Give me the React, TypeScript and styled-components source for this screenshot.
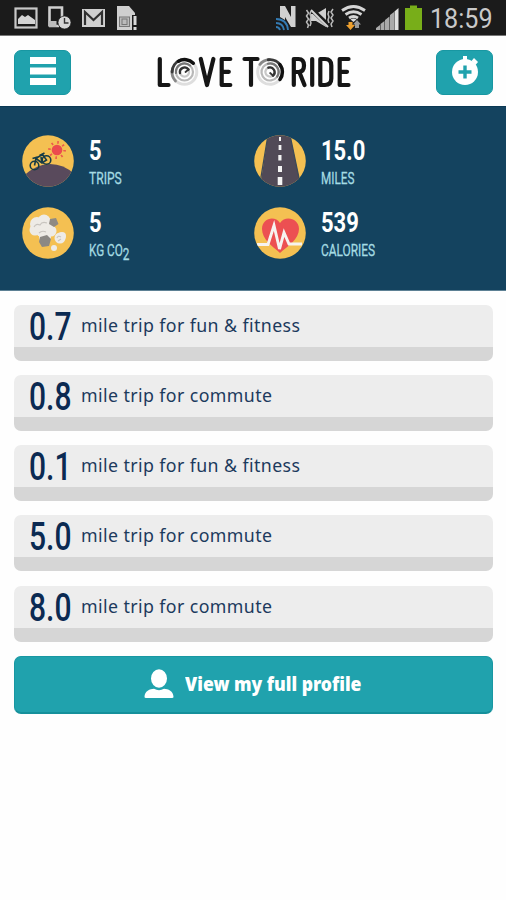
import React from 'react';
import styled, { createGlobalStyle } from 'styled-components';

const GlobalStyle = createGlobalStyle`
  * { box-sizing: border-box; }
  body { margin: 0; background: #fefefe; font-family: "Noto Sans", "Open Sans", sans-serif; }
  svg { display: block; flex: none; }
`;

const Screen = styled.div`
  width: 506px;
  height: 900px;
  display: flex;
  flex-direction: column;
  overflow: hidden;
  background: #fefefe;
`;

const StatusBar = styled.header`
  flex: none;
  height: 36px;
  display: flex;
  justify-content: space-between;
  background: #1b1b1b;
  border-bottom: 1px solid #777;
`;

const StatusGroup = styled.div`
  display: flex;
`;

const Narrow = styled.span<{ $scale: number }>`
  display: block;
  white-space: nowrap;
  transform: scaleX(${(p) => p.$scale});
  transform-origin: 0 50%;
`;

const Clock = styled(Narrow)`
  width: 76px;
  font: 400 27px/38px Roboto, sans-serif;
  color: #c9c9c9;
`;

const TitleBar = styled.div`
  flex: none;
  height: 70px;
  padding: 13.5px 13px 0 14px;
  display: flex;
  justify-content: space-between;
  align-items: flex-start;
`;

const IconButton = styled.button`
  width: 57px;
  height: 45px;
  padding: 0;
  display: flex;
  align-items: center;
  justify-content: center;
  border: 1px solid #1897a2;
  border-radius: 7px;
  background: #20a2ad;
`;

const Stats = styled.section`
  flex: none;
  height: 185px;
  padding: 28px 0 0 22px;
  display: grid;
  grid-template-columns: 232px 1fr;
  grid-template-rows: 71.5px 71.5px;
  background: #14435f;
  border-top: 1px solid #0a3853;
  border-bottom: 1px solid #5d8094;
`;

const Stat = styled.div`
  display: flex;
  gap: 15px;
`;

const StatText = styled.div`
  padding-top: 1px;
`;

const StatValue = styled(Narrow)`
  font: 700 27.5px/29px Roboto, sans-serif;
  color: #fff;
`;

const StatLabel = styled(Narrow)`
  font: 400 17px/27px Roboto, sans-serif;
  color: #a5dce3;
  -webkit-text-stroke: 0.3px #a5dce3;
`;

const Subscript = styled.span`
  position: relative;
  top: 4px;
`;

const Trips = styled.ul`
  flex: none;
  margin: 0;
  padding: 13.5px 13px 0 14px;
  display: flex;
  flex-direction: column;
  gap: 14.3px;
  list-style: none;
`;

const Trip = styled.li`
  height: 56px;
  padding-left: 15px;
  display: flex;
  border-radius: 7px;
  border-bottom: 14px solid #d6d6d6;
  background: #ededed;
  color: #0b2a52;
`;

const Distance = styled(Narrow)`
  width: 52px;
  font: 500 39.5px/43px Roboto, sans-serif;
`;

const TripLabel = styled(Narrow)`
  font: 400 18.5px/40px "Noto Sans", sans-serif;
  letter-spacing: 0.42px;
  color: #1c3a5d;
`;

const ProfileButton = styled.button`
  flex: none;
  height: 58.5px;
  margin: 14px 13px 0 14px;
  padding: 0 0 0 129px;
  display: flex;
  align-items: center;
  gap: 10.5px;
  border: 1px solid #1897a2;
  border-bottom: 2px solid #15909b;
  border-radius: 7px;
  background: #20a2ad;
`;

const ProfileLabel = styled(Narrow)`
  font: 900 19.5px/26px "Noto Sans", sans-serif;
  color: #fff;
`;

const LeftStatus = () => (
  <StatusGroup>
    <svg width="44" height="35" viewBox="0 0 44 35">
      <rect x="15.5" y="8.5" width="21" height="19" fill="none" stroke="#c8c8c8" strokeWidth="2.2" />
      <path d="M18 24v-5l4-4 3 2 3-2 7 5v4z" fill="#d4d4d4" />
    </svg>
    <svg width="33" height="35" viewBox="44 0 33 35">
      <path d="M49.5 26V7.5H62V17M49 26h10" fill="none" stroke="#cfcfcf" strokeWidth="2.6" />
      <path d="M48.5 21h8v6h-8z" fill="#bbb" />
      <circle cx="64.500" cy="22.500" r="6.500" fill="#d6d6d6" stroke="#1b1b1b" strokeWidth=".7" />
      <path d="M64.500 18v5h4" fill="none" stroke="#333" strokeWidth="1.400" />
    </svg>
    <svg width="33" height="35" viewBox="77 0 33 35">
      <rect x="82" y="9" width="23" height="18" fill="#d0d0d0" />
      <path d="M85 25V12l8.500 8L102 12v13" fill="none" stroke="#303030" strokeWidth="2.200" />
    </svg>
    <svg width="32" height="35" viewBox="110 0 32 35">
      <path d="M117 6h12l6 7v17h-18z" fill="#cfcfcf" />
      <rect x="119.500" y="17" width="10" height="9.500" fill="#bbb" stroke="#777" />
      <rect x="122" y="19" width="5" height="5.500" fill="none" stroke="#777" />
      <path d="M132 15h6v16h-6z" fill="#1b1b1b" />
      <path d="M135 16v9m0 2v3" stroke="#d8d8d8" strokeWidth="3" />
    </svg>
  </StatusGroup>
);

const RightStatus = () => (
  <StatusGroup>
    <svg width="31" height="35" viewBox="272 0 31 35">
      <path d="M280 17V6h5l6 11V6h4.500v21H291l-6-10v3" fill="#d0d0d0" />
      <g fill="none" stroke="#347bb3" strokeWidth="1.900">
        <path d="M276 19q11 0 12 11M276 23q7 0 8 7M276 27q3 0 4 3" />
      </g>
    </svg>
    <svg width="35" height="35" viewBox="303 0 35 35">
      <path d="M311 14h5l10-6v19l-10-6h-5z" fill="#cfcfcf" />
      <path d="M311 9l18 17" stroke="#1b1b1b" strokeWidth="4.500" />
      <path d="M311 10l17 17" stroke="#d4d4d4" strokeWidth="2" />
      <path d="M306.500 10l2 3-2 3 2 3-2 3 2 3-1 3M333 9l-2 3 2 3-2 3 2 3-2 3 1 3M329 11l-1 3 1 3-1 3 1 3M311 11l-1 3 1 3-1 3 1 3 -1 3" fill="none" stroke="#bbb" strokeWidth="1.500" />
    </svg>
    <svg width="34" height="35" viewBox="338 0 34 35">
      <g fill="none" stroke="#d5d5d5" strokeWidth="2.800">
        <path d="M342 10.500q11.500-8 23 0" />
        <path d="M345.500 14.500q8-5.500 16 0" />
        <path d="M349 18q4.500-3 9 0" />
      </g>
      <path d="M353.500 22l-3-2.500q3-2 6 0z" fill="#ddd" />
      <path d="M348.500 22h4v3h2.500l-4.500 5-4.500-5h2.500z" fill="#eda02f" />
      <path d="M357 20l4 4.500h-2V28h-4v-3.500h-2z" fill="#999" />
    </svg>
    <svg width="31" height="35" viewBox="372 0 31 35">
      <path d="M376 30v-2l4-3v5zM380.500 30v-6l4-3v9zM385 30V20l4.500-3.500V30zM390 30V15l4-3v18z" fill="#aaa" />
      <path d="M394.500 30V11.500L398.500 8v22z" fill="#e1e1e1" />
    </svg>
    <svg width="27" height="35" viewBox="403 0 27 35">
      <path d="M405 8h5V5.500h7V8h5v22h-17z" fill="#78ae19" />
    </svg>
    <Clock $scale={0.93}>18:59</Clock>
  </StatusGroup>
);

const Swirl = ({ cx, cy, turn }: { cx: number; cy: number; turn: number }) => (
  <g transform={`translate(${cx} ${cy}) rotate(${turn})`} fill="none" strokeLinecap="round">
    <circle r="12.300" stroke="#dedede" strokeWidth="3" />
    <circle r="8.500" stroke="#b8b8b8" strokeWidth="2.200" />
    <circle r="4.600" stroke="#c8c8c8" strokeWidth="2.200" />
    <path d="M-9 9A12.700 12.700 0 0 1-12.400-1" stroke="#888" strokeWidth="2.800" />
    <path d="M-12.400 0A12.400 12.400 0 0 1-4-11.800" stroke="#3a3a3a" strokeWidth="2.900" />
    <path d="M-6-10.800A12.400 12.400 0 0 1 8.800-8.800" stroke="#111" strokeWidth="3.500" />
    <path d="M-8.500 1A8.500 8.500 0 0 1 5.500-6.500" stroke="#777" strokeWidth="2.200" />
    <path d="M-4.500 1A4.700 4.700 0 0 1 4-2.500" stroke="#333" strokeWidth="2.400" />
    <path d="M4-2.500L1 0" stroke="#333" strokeWidth="1.800" />
  </g>
);

const Logo = () => (
  <svg width="206" height="44" viewBox="151 49.500 206 44" aria-label="Love to Ride">
    <g fill="none" stroke="#151515" strokeWidth="4.200" strokeLinecap="round" strokeLinejoin="round">
      <path d="M159.800 58.500V84.500H168.500" />
      <path d="M200.800 58.500L207 84.500 213.400 58.500" />
      <path d="M230.300 58.500H221.700V84.500H230.300M221.700 71.300H228.800" />
      <path d="M244.500 58.500H257.500M251 58.500V84.500" />
      <path d="M293.800 84.500V58.500H298.500Q304 58.500 304 65T298.500 71.500H293.800M299.500 72L304.500 84.500" />
      <path d="M312.200 58.500V84.500" />
      <path d="M320.300 58.500V84.500H325Q331.300 84.500 331.300 78V65Q331.300 58.500 325 58.500Z" />
      <path d="M348.500 58.500H339.700V84.500H348.500M339.700 71.300H347" />
    </g>
    <Swirl cx={184.5} cy={71.500} turn={0} />
    <Swirl cx={270} cy={71.500} turn={82} />
  </svg>
);

const MenuIcon = () => (
  <svg width="28" height="30" viewBox="0 0 28 30">
    <path d="M1 0h26v7H1zM1 10.500h26v7H1zM1 21h26v7H1z" fill="#fff" />
  </svg>
);

const StopwatchIcon = () => (
  <svg width="28" height="32" viewBox="0 0 28 32">
    <circle cx="14" cy="16" r="13" fill="#fff" />
    <path d="M12 0h4V5.500h-4zM20.500 5l2.500-3 4 4-2.500 3z" fill="#fff" />
    <path d="M14 9.500v13M7.500 16h13" stroke="#20a2ad" strokeWidth="3.400" />
  </svg>
);

const Badge = ({ id, children }: { id: string; children: React.ReactNode }) => (
  <svg width="52" height="52" viewBox="0 0 52 52">
    <clipPath id={id}><circle cx="26" cy="26" r="25.800" /></clipPath>
    <g clipPath={`url(#${id})`}>
      <rect width="52" height="52" fill="#f4c052" />
      {children}
    </g>
  </svg>
);

const TripsBadge = () => (
  <Badge id="trips">
    <path d="M0 42Q14 29 28 29T52 39V52H0Z" fill="#594a5c" />
    <circle cx="35" cy="15" r="5.300" fill="#ec4b4e" />
    <circle cx="35" cy="15" r="7.600" fill="none" stroke="#ec5a4c" strokeWidth="2.600" strokeDasharray="1.600 4.370" />
    <g fill="none" stroke="#173c46" strokeWidth="1.600">
      <circle cx="12.500" cy="30.500" r="4.300" />
      <circle cx="24.500" cy="25" r="4.300" />
      <path d="M12.500 30.500l1.500-7 6 4.500 4.500-3-4-5.500-6 3.500M10.500 23.500l5-1.500M17.500 20.500l5-2.500M20 28l-1-6" />
    </g>
  </Badge>
);

const CarbonBadge = () => (
  <Badge id="carbon">
    <g fill="#eeebe6">
      <circle cx="15" cy="17" r="7" /><circle cx="22" cy="14" r="6.500" /><circle cx="13" cy="23" r="5.500" />
      <circle cx="22" cy="22" r="9" /><circle cx="29" cy="24" r="5.500" /><circle cx="23" cy="30" r="6" />
      <circle cx="38" cy="31" r="5.500" /><circle cx="40" cy="29" r="4" /><circle cx="32" cy="41" r="3" />
    </g>
    <path d="M28 12l6-1 2.500 6-4.500 3-5-3z" fill="#8f8a83" />
    <path d="M18 30l7-2 4 4-2 7-7 1-3-5z" fill="#8b8884" />
    <path d="M12 20q2-4 6-2 2-4 7-2M17 26q3-3 7-1M35 31q1-3 4-1M36 34l3-2" fill="none" stroke="#c8c4bf" strokeWidth="1.100" />
  </Badge>
);

const MilesBadge = () => (
  <Badge id="miles">
    <path d="M14 0H36L47 52H6Z" fill="#514a57" />
    <path d="M14 0L6 48M36 0L46 48" stroke="#3d4a58" strokeWidth="1.300" />
    <path d="M25 2h2v4h-2zM24.600 10h2.800v5h-2.800zM24.300 20h3.200v5.500h-3.200zM24 31h4v6h-4zM23.700 42h4.600v8h-4.600z" fill="#f4f4f4" />
  </Badge>
);

const CaloriesBadge = () => (
  <Badge id="calories">
    <path d="M26 46C18 39 8 32 8 22C8 11 21 8 26 16C31 8 45 11 45 22C45 32 34 39 26 46Z" fill="#ec5052" />
    <path d="M3 37.500H14L20 18.500L25.500 42L30 25.500L35 37H48" fill="none" stroke="#f6f3f0" strokeWidth="2.900" />
  </Badge>
);

const PersonIcon = () => (
  <svg width="30" height="30" viewBox="0 0 30 30">
    <ellipse cx="15" cy="9.500" rx="8" ry="9.200" fill="#fff" />
    <path d="M.5 28C.5 22 6 20 10 19.800Q15 22.500 20 19.800C24 20 29.500 22 29.500 28Q29.500 29 28 29H2Q.5 29 .5 28Z" fill="#fff" />
  </svg>
);

const stats = [
  { icon: <TripsBadge />, value: '5', label: 'TRIPS', scale: 0.71 },
  { icon: <MilesBadge />, value: '15.0', label: 'MILES', scale: 0.69 },
  { icon: <CarbonBadge />, value: '5', label: <>KG CO<Subscript>2</Subscript></>, scale: 0.69 },
  { icon: <CaloriesBadge />, value: '539', label: 'CALORIES', scale: 0.7 },
];

const trips = [
  { miles: '0.7', label: 'mile trip for fun & fitness' },
  { miles: '0.8', label: 'mile trip for commute' },
  { miles: '0.1', label: 'mile trip for fun & fitness' },
  { miles: '5.0', label: 'mile trip for commute' },
  { miles: '8.0', label: 'mile trip for commute' },
];

export default function App() {
  return (
    <Screen>
      <GlobalStyle />
      <StatusBar>
        <LeftStatus />
        <RightStatus />
      </StatusBar>
      <TitleBar>
        <IconButton aria-label="Menu"><MenuIcon /></IconButton>
        <Logo />
        <IconButton aria-label="Add trip"><StopwatchIcon /></IconButton>
      </TitleBar>
      <Stats>
        {stats.map((s, i) => (
          <Stat key={i}>
            {s.icon}
            <StatText>
              <StatValue $scale={0.8}>{s.value}</StatValue>
              <StatLabel $scale={s.scale}>{s.label}</StatLabel>
            </StatText>
          </Stat>
        ))}
      </Stats>
      <Trips>
        {trips.map((t, i) => (
          <Trip key={i}>
            <Distance $scale={0.76}>{t.miles}</Distance>
            <TripLabel $scale={0.96}>{t.label}</TripLabel>
          </Trip>
        ))}
      </Trips>
      <ProfileButton>
        <PersonIcon />
        <ProfileLabel $scale={0.9}>View my full profile</ProfileLabel>
      </ProfileButton>
    </Screen>
  );
}
